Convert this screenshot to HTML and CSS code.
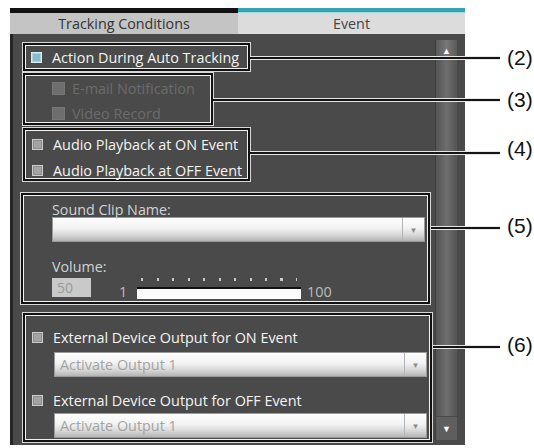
FILE: index.html
```html
<!DOCTYPE html>
<html>
<head>
<meta charset="utf-8">
<link rel="stylesheet" href="styles.css">
</head>
<body>
<div class="figure">
  <div class="panel">
    <div class="tabs">
      <div class="tab tab-off">Tracking Conditions</div>
      <div class="tab tab-on">Event</div>
    </div>
    <div class="body">
      <div class="content">
        <div class="box box2">
          <div class="row"><span class="cb cb-teal"></span><span class="lbl">Action During Auto Tracking</span></div>
        </div>
        <div class="box box3">
          <div class="row dis"><span class="cb cb-dis"></span><span class="lbl">E-mail Notification</span></div>
          <div class="row dis"><span class="cb cb-dis"></span><span class="lbl">Video Record</span></div>
        </div>
        <div class="box box4">
          <div class="row"><span class="cb cb-gray"></span><span class="lbl">Audio Playback at ON Event</span></div>
          <div class="row"><span class="cb cb-gray"></span><span class="lbl">Audio Playback at OFF Event</span></div>
        </div>
        <div class="box box5">
          <div class="field-lbl">Sound Clip Name:</div>
          <div class="select"><span class="select-val"></span><span class="select-btn">&#9660;</span></div>
          <div class="field-lbl vol-lbl">Volume:</div>
          <div class="vol-row">
            <span class="vol-input">50</span>
            <span class="vol-min">1</span>
            <div class="slider">
              <div class="ticks"></div>
              <div class="track"></div>
            </div>
            <span class="vol-max">100</span>
          </div>
        </div>
        <div class="box box6">
          <div class="row ext-row first"><span class="cb cb-gray"></span><span class="lbl">External Device Output for ON Event</span></div>
          <div class="select ext-select"><span class="select-val">Activate Output 1</span><span class="select-btn">&#9660;</span></div>
          <div class="row ext-row second"><span class="cb cb-gray"></span><span class="lbl">External Device Output for OFF Event</span></div>
          <div class="select ext-select second-sel"><span class="select-val">Activate Output 1</span><span class="select-btn">&#9660;</span></div>
        </div>
      </div>
      <div class="scrollbar">
        <div class="sb-btn sb-up">&#9650;</div>
        <div class="sb-track"></div>
        <div class="sb-btn sb-down">&#9660;</div>
      </div>
    </div>
  </div>

  <div class="leader l2"></div><div class="callout c2">(2)</div>
  <div class="leader l3"></div><div class="callout c3">(3)</div>
  <div class="leader l4"></div><div class="callout c4">(4)</div>
  <div class="leader l5"></div><div class="callout c5">(5)</div>
  <div class="leader l6"></div><div class="callout c6">(6)</div>
</div>
</body>
</html>
```
FILE: styles.css
```css
* { box-sizing: border-box; }
html, body { margin: 0; padding: 0; background: #fff; }
body { font-family: "Open Sans", "Noto Sans", sans-serif; }

.figure { position: relative; width: 534px; height: 448px; overflow: hidden; background: #fff; }

.panel { margin: 8px 0 0 10px; width: 455px; height: 437px; display: flex; flex-direction: column; }

.tabs { display: flex; height: 26px; }
.tab { display: flex; align-items: center; justify-content: center; font-size: 14.3px; color: #333; }
.tab-off { width: 228px; background: #c4c4c4; border-top: 5px solid #121212; }
.tab-on { flex: 1; background: #dcdcdc; border-top: 4px solid #33a3b0; box-shadow: inset 0 1px 0 #9fd8df; color: #444; }

.body { flex: 1; display: flex; background: #4a4a4a; border-left: 3px solid #262626; }
.content { flex: 1; display: flex; flex-direction: column; padding: 9px 0 0 10px; }

.box { border: 2px solid #111; box-shadow: inset 0 0 0 1px #f2f2f2, 0 0 0 1px #d8d8d8; }
.box2 { width: 227px; height: 28px; padding-left: 6px; display: flex; align-items: center; }
.box3 { width: 190px; height: 52px; margin-top: 2px; padding: 1px 0 0 27px; }
.box4 { width: 227px; height: 53px; margin-top: 3px; padding: 1px 0 0 7px; }
.box5 { width: 409px; height: 111px; margin: 12px 0 0 -2px; padding: 8px 0 0 29px; }
.box6 { width: 409px; height: 129px; margin-top: 9px; padding: 14px 0 0 7px; }

.row { display: flex; align-items: center; height: 25px; font-size: 14.4px; color: #f4f4f4; white-space: nowrap; }
.box2 .row { height: auto; }
.box4 .row { height: 26px; }
.lbl { margin-left: 10px; }
.dis { color: #6c6c6c; }
.dis .lbl { margin-left: 7px; }

.cb { display: inline-block; width: 11px; height: 11px; flex: none; }
.cb-teal { background: #86bccc; border: 1px solid #d7eef3; box-shadow: inset 0 0 0 1px #a9d4df; }
.cb-gray { background: #a4a4a4; border: 1px solid #cdcdcd; box-shadow: inset 0 0 0 1px #8c8c8c; }
.cb-dis { width: 13px; height: 13px; background: #6e6e6e; border: 1px solid #767676; }

.field-lbl { font-size: 14.3px; line-height: 14px; color: #cfd5d5; }
.vol-lbl { margin-top: 18px; }

.select { display: flex; width: 373px; height: 25px; background: linear-gradient(#fefefe, #f2f2f2 45%, #d6d6d6 75%, #b4b4b4); border: 1px solid #9a9a9a; }
.select-val { flex: 1; font-size: 14.4px; line-height: 23px; padding-left: 5px; color: #a3a3a3; }
.select-btn { width: 22px; border-left: 1px solid #b4b4b4; display: flex; align-items: center; justify-content: center; font-size: 8px; color: #8c8c8c; }

.vol-row { display: flex; align-items: flex-end; height: 21px; margin-top: 4px; }
.vol-input { width: 39px; height: 19px; margin-bottom: 2px; background: #c9c9c9; font-size: 14px; line-height: 19px; padding-left: 5px; color: #9a9a9a; }
.vol-min { margin-left: 28px; width: 18px; font-size: 14.4px; line-height: 15px; color: #bdbdbd; }
.slider { width: 164px; display: flex; flex-direction: column; }
.ticks { height: 3px; margin: 0 4px 6px 4px; background: repeating-linear-gradient(90deg, #c9c9c9 0 2px, transparent 2px 15.5px); }
.track { height: 12px; background: #fbfbfb; border-top: 2px solid #111; }
.vol-max { margin-left: 6px; font-size: 14.4px; line-height: 15px; color: #bdbdbd; }

.ext-row { height: 16px; }
.ext-row .lbl { margin-left: 10px; }
.ext-select { margin: 7px 0 0 22px; }
.ext-row.second { margin-top: 15px; }
.ext-select.second-sel { margin-top: 5px; }

.scrollbar { width: 22px; margin: 6px 8px 5px 0; display: flex; flex-direction: column; background: #585858; border-left: 1px solid #3c3c3c; }
.sb-btn { height: 20px; display: flex; align-items: center; justify-content: center; color: #fff; font-size: 9px; }
.sb-up { background: linear-gradient(90deg, #5a5a5a, #787878 50%, #5a5a5a); }
.sb-track { flex: 1; margin: 0 3px; background: linear-gradient(90deg, #5c5c5c, #6e6e6e 50%, #5c5c5c); }
.sb-down { height: 24px; background: #5e5e5e; border-top: 1px solid #4a4a4a; }

.leader { position: absolute; height: 2px; background: #151515; right: 34px; box-shadow: 0 1px 0 #e6e6e6, 0 -1px 0 #e6e6e6; }
.l2 { top: 57px; left: 250px; }
.l3 { top: 99px; left: 213px; }
.l4 { top: 152px; left: 250px; }
.l5 { top: 227px; left: 431px; }
.l6 { top: 346px; left: 433px; }

.callout { position: absolute; left: 507px; font-family: "Liberation Sans", Arial, sans-serif; font-size: 21px; line-height: 24px; color: #111; }
.c2 { top: 46px; }
.c3 { top: 88px; }
.c4 { top: 137px; }
.c5 { top: 214px; }
.c6 { top: 333px; }
```
